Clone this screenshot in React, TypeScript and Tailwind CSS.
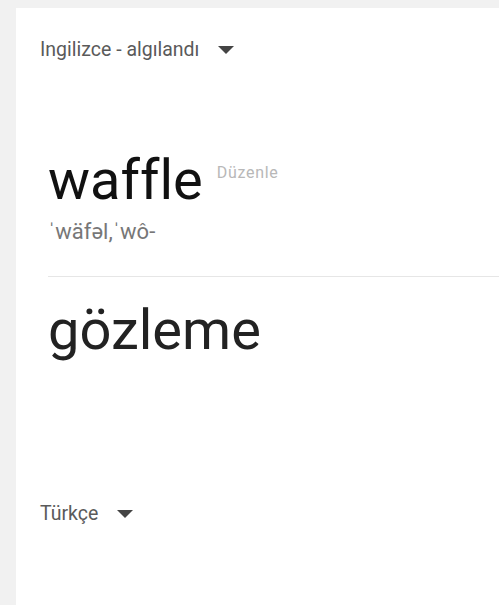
import React from 'react';

const Caret = () => (
  <svg width="16" height="8" viewBox="0 0 10 5" className="text-[#444]">
    <path d="M0 0l5 5 5-5z" fill="currentColor" />
  </svg>
);

export default function App() {
  return (
    <div className="min-h-[605px] bg-[#f1f1f1] pt-2 pl-4 font-['Roboto',sans-serif] [font-variant-ligatures:none]">
      <div className="min-h-[597px] bg-white flex flex-col">
        {/* source language */}
        <div className="flex items-center gap-[19px] pl-6 pt-[27px] text-[19.5px] text-[#5a5a5a]">
          <span>Ingilizce - algılandı</span>
          <Caret />
        </div>

        {/* source word */}
        <div className="pl-8 pt-[84px]">
          <div className="flex items-start">
            <span className="text-[56px] leading-[64px] text-[#111]">waffle</span>
            <span className="ml-[14px] mt-[13px] text-[16px] text-[#b8b8b8] tracking-[0.7px]">Düzenle</span>
          </div>
          <div className="text-[22px] leading-6 text-[#777] mt-[8px]">ˈwäfəl,ˈwô-</div>
        </div>

        <div className="ml-8 mt-[32px] border-t border-[#e6e6e6]" />

        {/* translation */}
        <div className="pl-8 pt-[21px] text-[56px] leading-[64px] text-[#222]">gözleme</div>

        {/* target language */}
        <div className="flex items-center gap-[19px] pl-6 mt-[137px] text-[19.5px] text-[#5a5a5a]">
          <span>Türkçe</span>
          <Caret />
        </div>
      </div>
    </div>
  );
}
